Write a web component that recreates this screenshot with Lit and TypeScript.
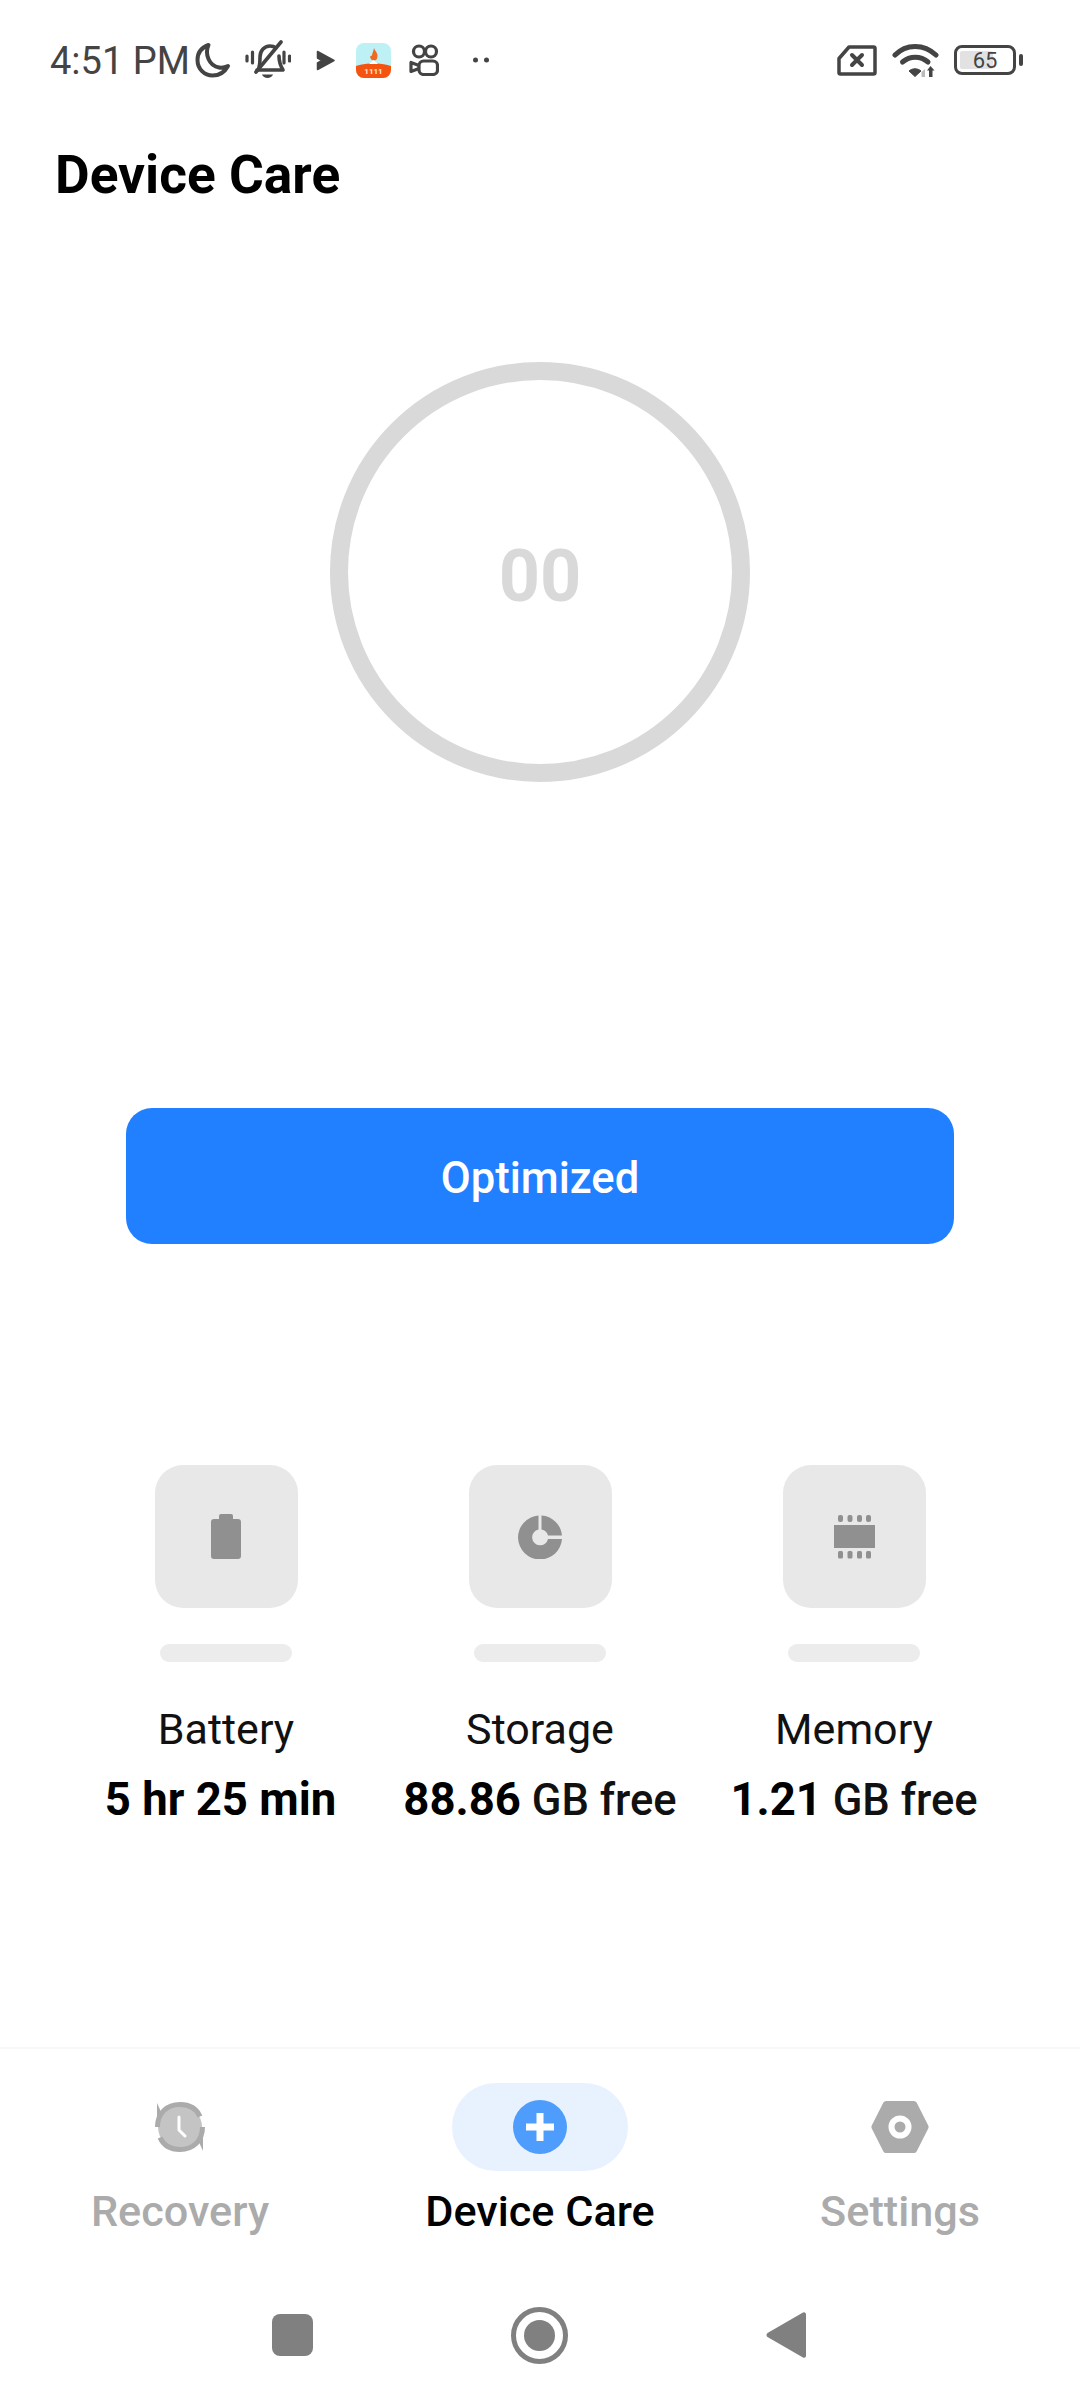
import { LitElement, html, css, svg } from "lit";
import { customElement } from "lit/decorators.js";

const DARK = "#444";

const moon = html`<svg class="moon" width="36" height="36" viewBox="0 0 36 36"><path d="M13.500 3C6.500 5.500 2.500 11 2.500 18c0 9 7 15.500 15 15.500 6.500 0 12-3 15.500-9.500-3 1.500-6 2-9 1.500C14 24 9.500 12 13.500 3z" fill="none" stroke="${DARK}" stroke-width="4" stroke-linejoin="round"/></svg>`;

const bell = html`<svg class="bell" width="46" height="40" viewBox="0 0 46 40"><g fill="none" stroke="${DARK}" stroke-width="3.600" stroke-linecap="round" stroke-linejoin="round"><path d="M14 27c1-3 1-6 1-10 0-6 4-11 10-11 2.500 0 4.500 .8 6 2"/><path d="M34 16c0 6 1 9 4 14H12"/><path d="M11 32 36 2"/></g><g fill="none" stroke="${DARK}" stroke-width="3.200" stroke-linecap="round"><path d="M2 16v5M7.500 12v11M39 12v11M44.500 16v5"/></g><path d="M17 34.500h11c-1.500 4.500-9.500 4.500-11 0z" fill="${DARK}"/></svg>`;

const play = html`<svg class="play" width="19" height="21" viewBox="0 0 19 21"><path d="M1.500 1.500 18 10.500 1.500 19.500V13l4.500-2.500-4.500-2.500z" fill="${DARK}" stroke="${DARK}" stroke-width="1.500" stroke-linejoin="round"/></svg>`;

const appIcon = html`<svg class="app" width="35" height="35" viewBox="0 0 35 35"><defs><clipPath id="appclip"><rect width="35" height="35" rx="8"/></clipPath></defs><g clip-path="url(#appclip)"><rect width="35" height="35" fill="#bdf1f5"/><path d="M0 23c6-2 12-2.500 17.500-2.500S29 21 35 23v12H0z" fill="#f4540f"/><path d="M18 5c1 3 3.500 4.500 3.500 8 0 3-1.500 4.500-3.500 4.500S14 16 14 13c1 .5 1.800 0 2-1 .5-2.500 1.500-4 2-7z" fill="#ee6a22"/><path d="M13 21l4.500-4 4.500 4z" fill="#fff"/><text x="17.500" y="31" text-anchor="middle" font-family="Roboto" font-size="8" font-weight="700" fill="#ffe9d0">1111</text></g></svg>`;

const kuai = html`<svg class="kuai" width="30" height="32" viewBox="0 0 30 32"><g fill="none" stroke="${DARK}" stroke-width="3.200" stroke-linejoin="round"><circle cx="10" cy="7.500" r="5.500"/><circle cx="22" cy="7.500" r="5.500"/><rect x="10" y="17" width="18.500" height="13.500" rx="4.500"/><path d="M10 21.500 2 18.500v9l8-3"/></g></svg>`;

const dots = html`<svg class="dots" width="16" height="6" viewBox="0 0 16 6"><circle cx="2.500" cy="3" r="2.500" fill="${DARK}"/><circle cx="13.500" cy="3" r="2.500" fill="${DARK}"/></svg>`;

const sim = html`<svg class="sim" width="40" height="31" viewBox="0 0 40 31"><path d="M2 13.500 12 2h24.500a1.500 1.500 0 0 1 1.500 1.500v24a1.500 1.500 0 0 1-1.500 1.500h-33A1.500 1.500 0 0 1 2 27.500z" fill="none" stroke="${DARK}" stroke-width="3.500" stroke-linejoin="round"/><path d="M15 10l10 10M25 10 15 20" stroke="${DARK}" stroke-width="4" stroke-linecap="round"/></svg>`;

const wifi = html`<svg class="wifi" width="47" height="34" viewBox="0 0 47 34"><g fill="none" stroke="${DARK}" stroke-width="5" stroke-linecap="round"><path d="M3 12C14 .5 32 .5 44 12"/><path d="M10.500 19c7.500-6.500 18-6.500 25.500 0"/></g><path d="M17 28c3.500-3 8.500-3 12 0l-6 5.500z" fill="${DARK}" stroke="${DARK}" stroke-width="1" stroke-linejoin="round"/><path d="M33 26v8h-3.500v-5z" fill="#bbb"/><path d="M38.500 23l4 4.500h-2v6.500h-3.500v-6.500h-2z" fill="${DARK}"/></svg>`;

const batteryIcon = html`<svg width="30" height="45" viewBox="0 0 30 45"><path d="M8 2a2 2 0 0 1 2-2h10a2 2 0 0 1 2 2v3h5a3 3 0 0 1 3 3v34a3 3 0 0 1-3 3H3a3 3 0 0 1-3-3V8a3 3 0 0 1 3-3h5z" fill="#909090"/></svg>`;

const pieIcon = html`<svg width="44" height="44" viewBox="0 0 44 44"><path d="M20.500 0.500V14.500a8 8 0 1 0 9.500 9.500H44A22 22 0 1 1 20.500 .5z" fill="#909090"/><path d="M23.500 0.500A22 22 0 0 1 44 20.500H30A8 8 0 0 0 23.500 14.500z" fill="#909090"/></svg>`;

const chipIcon = html`<svg width="41" height="44" viewBox="0 0 41 44"><rect y="10" width="41" height="23" fill="#909090"/>${[4, 13.5, 23, 32].map(
  (x) => svg`<rect x=${x} y="0" width="5" height="7" rx="2" fill="#909090"/><rect x=${x} y="36" width="5" height="7.500" rx="1.500" fill="#909090"/>`
)}</svg>`;

const recoveryIcon = html`<svg width="52" height="54" viewBox="0 0 52 54"><circle cx="26" cy="27" r="22" fill="#c4c4c4"/><g fill="none" stroke="#ababab" stroke-width="5"><path d="M3.500 27C3.500 13 13 4.500 26 4.500c9 0 16.500 4 20 12"/><path d="M48.500 27c0 14-9.500 22.500-22.500 22.500-9 0-16.500-4-20-12"/></g><path d="M3 3v15l5-4zM49 51V36l-5 4z" fill="#ababab"/><path d="M25 17v13l6 6" fill="none" stroke="#fff" stroke-width="3" stroke-linecap="round" stroke-linejoin="round"/></svg>`;

const plusIcon = html`<svg width="54" height="54" viewBox="0 0 54 54"><circle cx="27" cy="27" r="27" fill="#4e9cfb"/><path d="M23.500 13h7v10.500H41v7H30.500V41h-7V30.500H13v-7h10.500z" fill="#fff"/></svg>`;

const gearIcon = html`<svg width="58" height="54" viewBox="0 0 58 54"><path d="M15 1h28a3 3 0 0 1 2.600 1.500L57 25a4 4 0 0 1 0 4L45.600 51.500A3 3 0 0 1 43 53H15a3 3 0 0 1-2.600-1.500L1 29a4 4 0 0 1 0-4L12.400 2.500A3 3 0 0 1 15 1z" fill="#ababab"/><circle cx="29" cy="27" r="8.500" fill="none" stroke="#fff" stroke-width="6"/></svg>`;

@customElement("app-root")
export class AppRoot extends LitElement {
  static styles = css`
    :host {
      display: block;
      width: 1080px;
      height: 2400px;
      background: #fff;
      font-family: Roboto, "Noto Sans", sans-serif;
      color: #000;
    }
    .page {
      height: 2400px;
      display: flex;
      flex-direction: column;
    }
    .status {
      height: 120px;
      display: flex;
      align-items: center;
      padding: 0 57px 0 50px;
      color: #444;
      box-sizing: border-box;
      flex: none;
    }
    .time {
      font-size: 38px;
      line-height: 40px;
      white-space: nowrap;
      padding-top: 2px;
    }
    .status svg {
      display: block;
      flex: none;
    }
    .moon { margin-left: 5px; }
    .left {
      display: flex;
      align-items: center;
    }
    .bell { margin-left: 14px; }
    .play { margin-left: 25px; }
    .app { margin-left: 21px; }
    .kuai { margin-left: 18px; }
    .dots { margin-left: 34px; }
    .right {
      margin-left: auto;
      display: flex;
      align-items: center;
    }
    .wifi { margin-left: 15px; }
    .batt {
      margin-left: 15px;
      width: 62px;
      height: 30px;
      border: 3.5px solid #444;
      border-radius: 8px;
      box-sizing: border-box;
      position: relative;
      display: flex;
      align-items: center;
      justify-content: center;
      font-size: 22px;
      color: #444;
    }
    .batt i {
      position: absolute;
      left: 3px;
      top: 3px;
      bottom: 3px;
      width: 33px;
      background: #e2e2e2;
      border-radius: 2px;
    }
    .batt span {
      position: relative;
    }
    .nub {
      width: 4px;
      height: 12px;
      background: #444;
      border-radius: 2px;
      margin-left: 3px;
    }
    h1 {
      margin: 0;
      padding-left: 55px;
      font-size: 53.300px;
      line-height: 58px;
      font-weight: 700;
      flex: none;
      margin-top: 26px;
    }
    .ring-wrap {
      margin-top: 158px;
      display: flex;
      justify-content: center;
      flex: none;
    }
    .ring {
      width: 420px;
      height: 420px;
      box-sizing: border-box;
      border: 18px solid #d9d9d9;
      border-radius: 50%;
      display: flex;
      align-items: center;
      justify-content: center;
      font-size: 72px;
      font-weight: 700;
      color: #d9d9d9;
      padding-top: 8px;
    }
    .btn {
      margin: 326px 126px 0 126px;
      height: 136px;
      box-sizing: border-box;
      padding-top: 4px;
      background: #2080ff;
      border-radius: 26px;
      display: flex;
      align-items: center;
      justify-content: center;
      color: #fff;
      font-size: 43.500px;
      font-weight: 500;
      flex: none;
    }
    .cards {
      margin-top: 221px;
      padding-left: 69px;
      display: grid;
      grid-template-columns: repeat(3, 314px);
      flex: none;
    }
    .card {
      display: flex;
      flex-direction: column;
      align-items: center;
    }
    .tile {
      width: 143px;
      height: 143px;
      border-radius: 28px;
      background: #e8e8e8;
      display: flex;
      align-items: center;
      justify-content: center;
    }
    .tile svg { display: block; }
    .bar {
      margin-top: 36px;
      width: 132px;
      height: 18px;
      border-radius: 9px;
      background: #ececec;
    }
    .lbl {
      margin-top: 42px;
      font-size: 43px;
      line-height: 50px;
      color: #111;
    }
    .val {
      margin-top: 21px;
      font-size: 43.500px;
      line-height: 50px;
      font-weight: 500;
      white-space: nowrap;
      color: #111;
    }
    .val b {
      font-size: 45.500px;
      font-weight: 700;
      color: #000;
    }
    .val.shift {
      margin-left: -11px;
    }
    .nav {
      margin-top: auto;
      border-top: 2px solid #f8f8f8;
      display: grid;
      grid-template-columns: repeat(3, 1fr);
      padding-top: 34px;
      flex: none;
    }
    .tab {
      display: flex;
      flex-direction: column;
      align-items: center;
    }
    .pill {
      width: 176px;
      height: 88px;
      border-radius: 44px;
      display: flex;
      align-items: center;
      justify-content: center;
    }
    .pill.on {
      background: #e8f2fe;
    }
    .pill svg { display: block; }
    .tab span {
      margin-top: 16px;
      font-size: 43.200px;
      line-height: 50px;
      font-weight: 500;
      color: #ababab;
    }
    .tab.on span {
      color: #000;
    }
    .sys {
      height: 115px;
      padding: 0 3px 15px 0;
      box-sizing: border-box;
      display: flex;
      align-items: center;
      justify-content: center;
      flex: none;
      margin-top: 48px;
    }
    .sys-sq {
      width: 41px;
      height: 42px;
      border-radius: 8px;
      background: #808080;
    }
    .sys-c {
      margin-left: 198px;
      width: 57px;
      height: 57px;
      box-sizing: border-box;
      border: 5.500px solid #808080;
      border-radius: 50%;
      display: flex;
      align-items: center;
      justify-content: center;
    }
    .sys-c i {
      width: 31px;
      height: 31px;
      border-radius: 50%;
      background: #808080;
    }
    .sys-t {
      display: block;
      margin-left: 198px;
    }
  `;

  render() {
    return html`<div class="page">
      <div class="status">
        <div class="left">
          <span class="time">4:51 PM</span>
          ${moon}${bell}${play}${appIcon}${kuai}${dots}
        </div>
        <div class="right">
          ${sim}${wifi}
          <div class="batt"><i></i><span>65</span></div>
          <div class="nub"></div>
        </div>
      </div>
      <h1>Device Care</h1>
      <div class="ring-wrap"><div class="ring">00</div></div>
      <div class="btn">Optimized</div>
      <div class="cards">
        <div class="card">
          <div class="tile">${batteryIcon}</div>
          <div class="bar"></div>
          <div class="lbl">Battery</div>
          <div class="val shift"><b>5 hr 25 min</b></div>
        </div>
        <div class="card">
          <div class="tile">${pieIcon}</div>
          <div class="bar"></div>
          <div class="lbl">Storage</div>
          <div class="val"><b>88.86</b> GB free</div>
        </div>
        <div class="card">
          <div class="tile">${chipIcon}</div>
          <div class="bar"></div>
          <div class="lbl">Memory</div>
          <div class="val"><b>1.21</b> GB free</div>
        </div>
      </div>
      <div class="nav">
        <div class="tab"><div class="pill">${recoveryIcon}</div><span>Recovery</span></div>
        <div class="tab on"><div class="pill on">${plusIcon}</div><span>Device Care</span></div>
        <div class="tab"><div class="pill">${gearIcon}</div><span>Settings</span></div>
      </div>
      <div class="sys">
        <div class="sys-sq"></div>
        <div class="sys-c"><i></i></div>
        <svg class="sys-t" width="40" height="48" viewBox="0 0 40 48"><path d="M37 1.500a2 2 0 0 1 3 1.500v42a2 2 0 0 1-3 1.500L1.500 26a2.500 2.500 0 0 1 0-4z" fill="#808080"/></svg>
      </div>
    </div>`;
  }
}
